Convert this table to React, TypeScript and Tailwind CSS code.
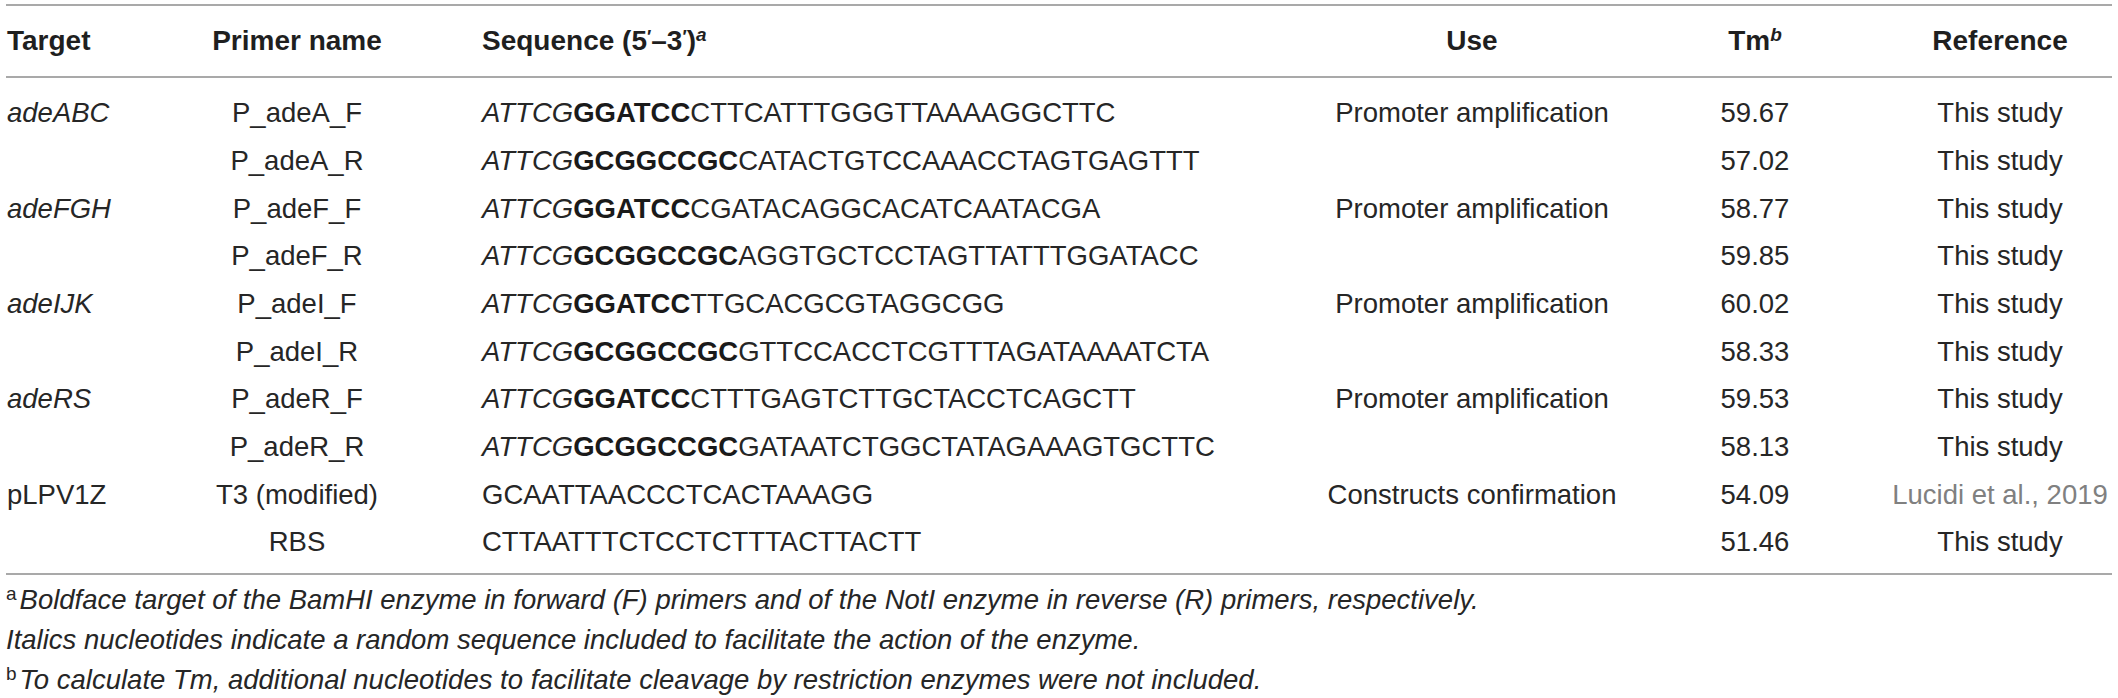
import React from "react";

type Row = {
  target: string;
  primer: string;
  pre?: string;
  bold?: string;
  rest: string;
  use: string;
  tm: string;
  ref: string;
  refGray?: boolean;
};

const rows: Row[] = [
  { target: "adeABC", primer: "P_adeA_F", pre: "ATTCG", bold: "GGATCC", rest: "CTTCATTTGGGTTAAAAGGCTTC", use: "Promoter amplification", tm: "59.67", ref: "This study" },
  { target: "", primer: "P_adeA_R", pre: "ATTCG", bold: "GCGGCCGC", rest: "CATACTGTCCAAACCTAGTGAGTTT", use: "", tm: "57.02", ref: "This study" },
  { target: "adeFGH", primer: "P_adeF_F", pre: "ATTCG", bold: "GGATCC", rest: "CGATACAGGCACATCAATACGA", use: "Promoter amplification", tm: "58.77", ref: "This study" },
  { target: "", primer: "P_adeF_R", pre: "ATTCG", bold: "GCGGCCGC", rest: "AGGTGCTCCTAGTTATTTGGATACC", use: "", tm: "59.85", ref: "This study" },
  { target: "adeIJK", primer: "P_adeI_F", pre: "ATTCG", bold: "GGATCC", rest: "TTGCACGCGTAGGCGG", use: "Promoter amplification", tm: "60.02", ref: "This study" },
  { target: "", primer: "P_adeI_R", pre: "ATTCG", bold: "GCGGCCGC", rest: "GTTCCACCTCGTTTAGATAAAATCTA", use: "", tm: "58.33", ref: "This study" },
  { target: "adeRS", primer: "P_adeR_F", pre: "ATTCG", bold: "GGATCC", rest: "CTTTGAGTCTTGCTACCTCAGCTT", use: "Promoter amplification", tm: "59.53", ref: "This study" },
  { target: "", primer: "P_adeR_R", pre: "ATTCG", bold: "GCGGCCGC", rest: "GATAATCTGGCTATAGAAAGTGCTTC", use: "", tm: "58.13", ref: "This study" },
  { target: "pLPV1Z", primer: "T3 (modified)", rest: "GCAATTAACCCTCACTAAAGG", use: "Constructs confirmation", tm: "54.09", ref: "Lucidi et al., 2019", refGray: true },
  { target: "", primer: "RBS", rest: "CTTAATTTCTCCTCTTTACTTACTT", use: "", tm: "51.46", ref: "This study" },
];

const grid = "grid grid-cols-[150px_326px_824px_332px_250px_224px]";

export default function App() {
  return (
    <div className="w-[2118px] h-[698px] bg-white overflow-hidden text-[#262626] font-['Liberation_Sans',Arial,sans-serif]">
      <div className="mx-[6px] pt-[4px]">
        {/* header */}
        <div className={`${grid} h-[74px] items-center border-t-2 border-b-2 border-[#a9a9a9] text-[28px] font-bold text-[#1f1f1f]`}>
          <div className="whitespace-nowrap pl-[1px]">Target</div>
          <div className="pr-[44px] text-center whitespace-nowrap">Primer name</div>
          <div className="whitespace-nowrap">
            Sequence (5<span className="text-[18px] align-[7px]">′</span>–3<span className="text-[18px] align-[7px]">′</span>)
            <sup className="italic text-[19px] align-[9px] top-0">a</sup>
          </div>
          <div className="text-center whitespace-nowrap">Use</div>
          <div className="pr-[16px] text-center whitespace-nowrap">
            Tm<sup className="italic text-[19px] align-[9px] top-0">b</sup>
          </div>
          <div className="flex justify-center whitespace-nowrap">Reference</div>
        </div>
        {/* body */}
        <div className="pt-[11px] pb-[7px] border-b-2 border-[#a9a9a9] text-[27.5px]">
          {rows.map((r, i) => (
            <div key={i} className={`${grid} h-[47.7px] items-center`}>
              <div className={`whitespace-nowrap pl-[1px] ${r.target === "pLPV1Z" ? "" : "italic"}`}>{r.target}</div>
              <div className="pr-[44px] text-center whitespace-nowrap">{r.primer}</div>
              <div className="whitespace-nowrap">
                {r.pre && <span className="italic">{r.pre}</span>}
                {r.bold && <span className="font-bold text-[#1a1a1a]">{r.bold}</span>}
                {r.rest}
              </div>
              <div className="text-center whitespace-nowrap">{r.use}</div>
              <div className="pr-[16px] text-center whitespace-nowrap">{r.tm}</div>
              <div className={`flex justify-center whitespace-nowrap ${r.refGray ? "text-[#808080]" : ""}`}>{r.ref}</div>
            </div>
          ))}
        </div>
        {/* footnotes */}
        <div className="pt-[5px] text-[27.5px] italic leading-[40px]">
          <div className="whitespace-nowrap">
            <sup className="not-italic text-[19px] align-[9px] top-0 mr-[3px]">a</sup>
            Boldface target of the BamHI enzyme in forward (F) primers and of the NotI enzyme in reverse (R) primers, respectively.
          </div>
          <div className="whitespace-nowrap">Italics nucleotides indicate a random sequence included to facilitate the action of the enzyme.</div>
          <div className="whitespace-nowrap">
            <sup className="not-italic text-[19px] align-[9px] top-0 mr-[3px]">b</sup>
            To calculate Tm, additional nucleotides to facilitate cleavage by restriction enzymes were not included.
          </div>
        </div>
      </div>
    </div>
  );
}
